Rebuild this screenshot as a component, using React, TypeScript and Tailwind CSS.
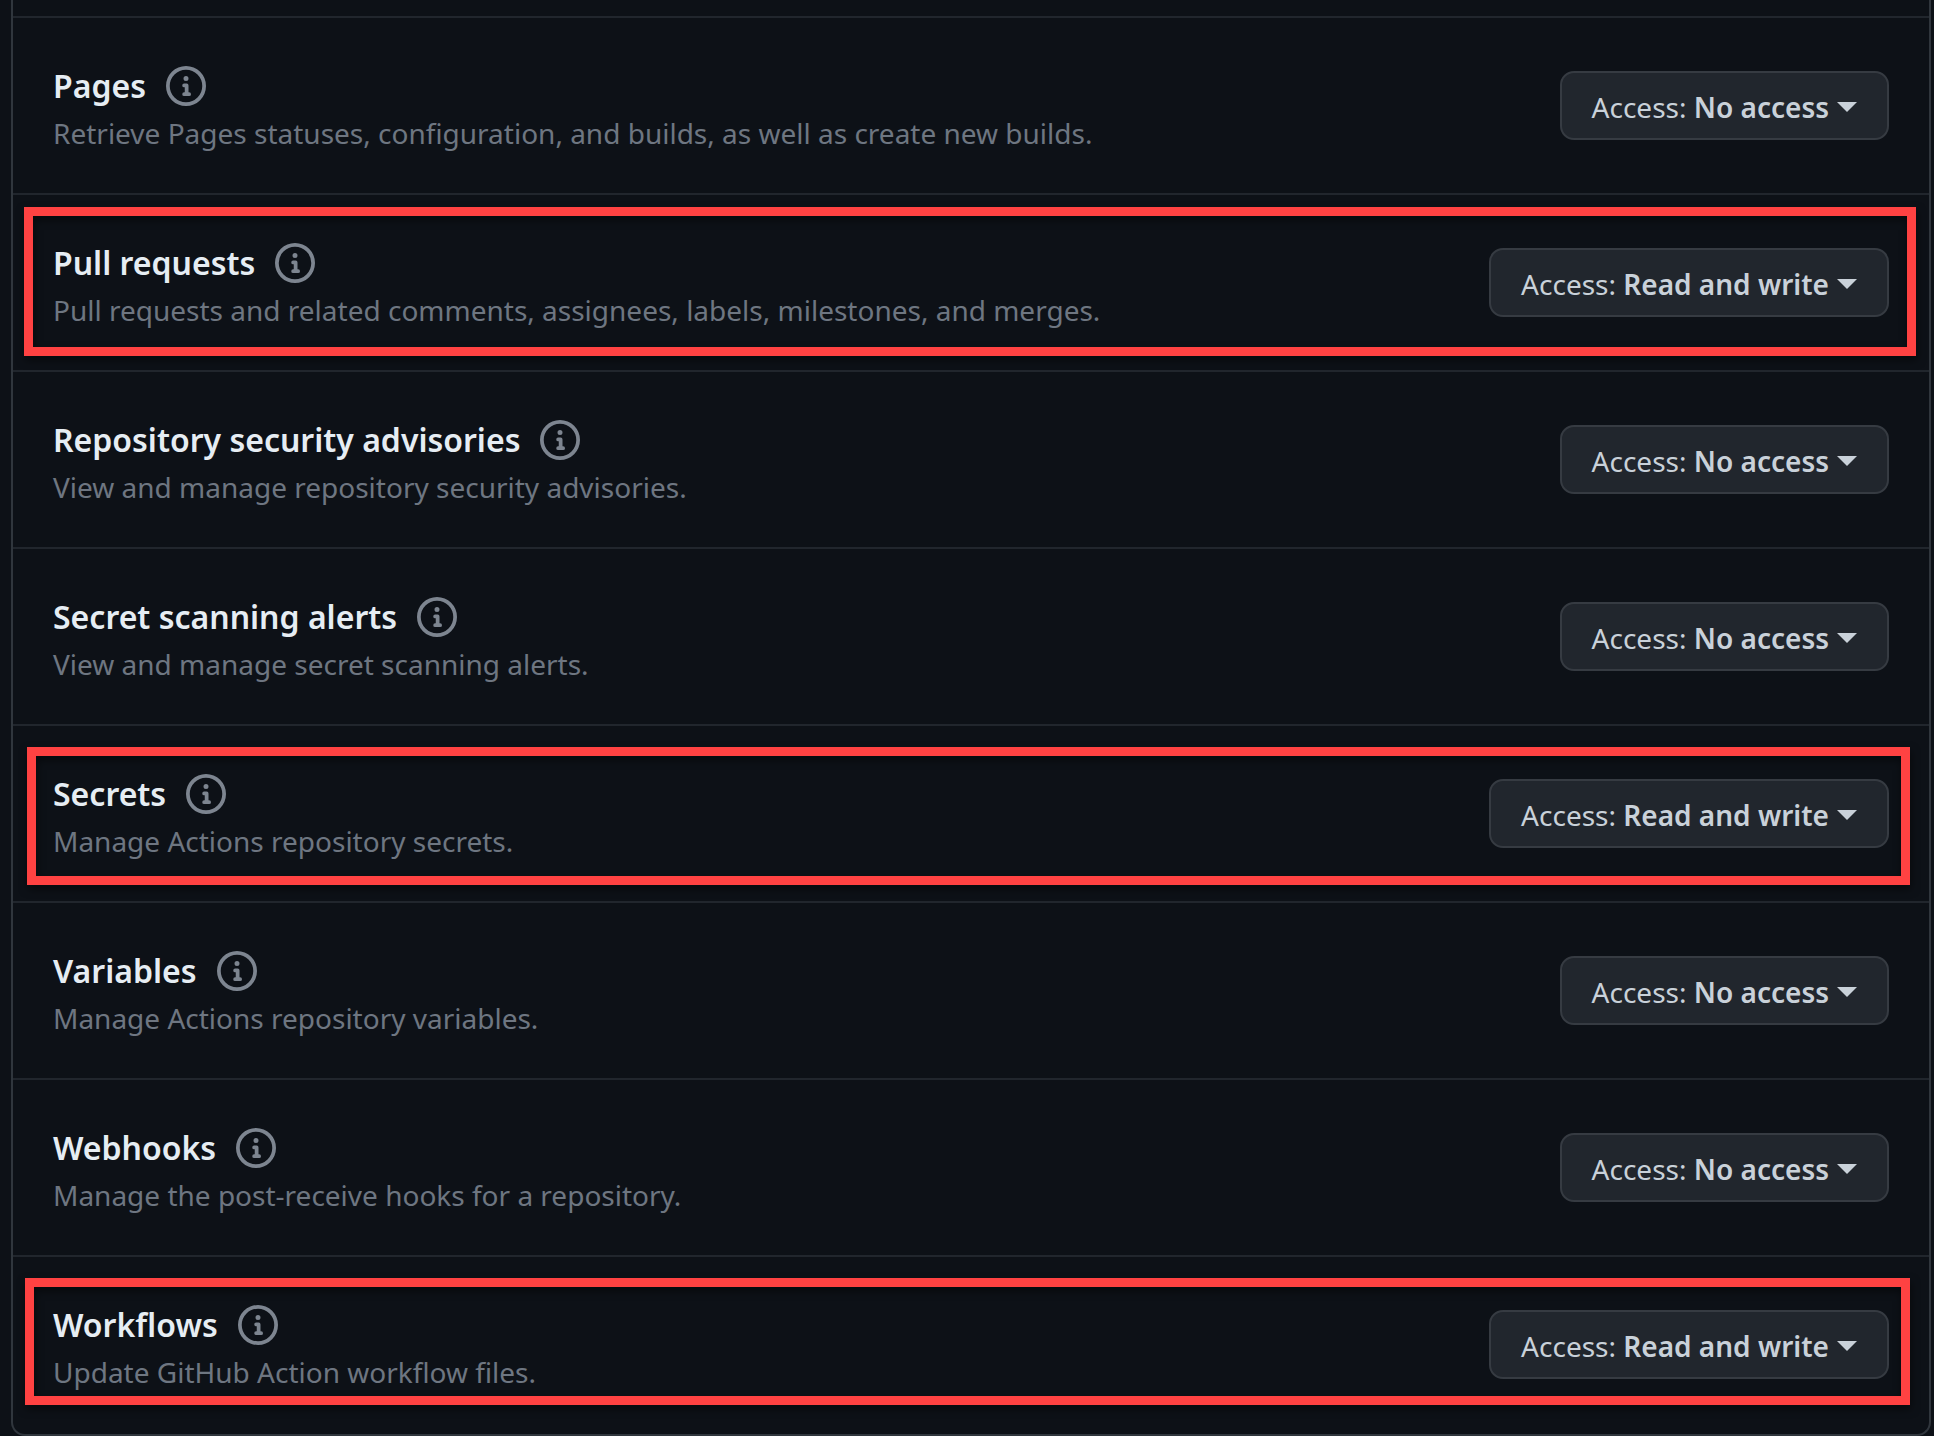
type Permission = {
  name: string;
  description: string;
  access: string;
  highlight?: string;
};

const permissions: Permission[] = [
  {
    name: "Pages",
    description: "Retrieve Pages statuses, configuration, and builds, as well as create new builds.",
    access: "No access",
  },
  {
    name: "Pull requests",
    description: "Pull requests and related comments, assignees, labels, milestones, and merges.",
    access: "Read and write",
    highlight: "top-[12px] bottom-[14px] left-[11px] right-[13px]",
  },
  {
    name: "Repository security advisories",
    description: "View and manage repository security advisories.",
    access: "No access",
  },
  {
    name: "Secret scanning alerts",
    description: "View and manage secret scanning alerts.",
    access: "No access",
  },
  {
    name: "Secrets",
    description: "Manage Actions repository secrets.",
    access: "Read and write",
    highlight: "top-[21px] bottom-[16px] left-[14px] right-[19px]",
  },
  {
    name: "Variables",
    description: "Manage Actions repository variables.",
    access: "No access",
  },
  {
    name: "Webhooks",
    description: "Manage the post-receive hooks for a repository.",
    access: "No access",
  },
  {
    name: "Workflows",
    description: "Update GitHub Action workflow files.",
    access: "Read and write",
    highlight: "top-[21px] bottom-[27px] left-[12px] right-[19px]",
  },
];

function InfoIcon() {
  return (
    <svg viewBox="0 0 16 16" className="size-10" fill="currentColor" aria-hidden="true">
      <path d="M0 8a8 8 0 1 1 16 0A8 8 0 0 1 0 8Zm8-6.5a6.5 6.5 0 1 0 0 13 6.5 6.5 0 0 0 0-13ZM6.5 7.75A.75.75 0 0 1 7.25 7h1a.75.75 0 0 1 .75.75v2.75h.25a.75.75 0 0 1 0 1.5h-2a.75.75 0 0 1 0-1.5h.25v-2h-.25a.75.75 0 0 1-.75-.75ZM8 6a1 1 0 1 1 0-2 1 1 0 0 1 0 2Z" />
    </svg>
  );
}

function PermissionRow({ name, description, access, highlight }: Permission) {
  return (
    <li className="relative flex items-start justify-between gap-8 border-t-2 border-[#21262d] pt-11 pr-10 pb-[37px] pl-10">
      <div>
        <div className="flex h-12 items-center gap-5">
          <h3 className="text-[32px] leading-[48px] font-semibold text-[#e6edf3]">{name}</h3>
          <button type="button" aria-label={`About ${name}`} className="text-[#7d8590]">
            <InfoIcon />
          </button>
        </div>
        <p className="text-[28px] leading-[46px] text-[#6e7681]">{description}</p>
      </div>
      <button
        type="button"
        aria-haspopup="menu"
        className="mt-[9px] flex h-[69px] shrink-0 items-center gap-2 rounded-[14px] border-2 border-[#363b42] bg-[#21262d] px-[30px] pt-[2px] text-[28px] text-[#c9d1d9]"
      >
        <span>
          Access: <span className="font-semibold">{access}</span>
        </span>
        <svg viewBox="0 0 20 10" className="h-[10px] w-5" fill="currentColor" aria-hidden="true">
          <path d="M0 0h20L10 10Z" />
        </svg>
      </button>
      {highlight && (
        <div
          className={`pointer-events-none absolute border-[9px] border-[#ff4242] drop-shadow-[1px_4px_4px_rgba(0,0,0,0.5)] ${highlight}`}
        />
      )}
    </li>
  );
}

export default function App() {
  return (
    <main className="min-h-screen overflow-hidden bg-[#0d1117] pr-[3px] pl-[11px] font-['Noto_Sans',sans-serif]">
      <ul className="rounded-b-[14px] border-2 border-t-0 border-[#30363d] pt-4 pb-[2px]">
        {permissions.map((permission) => (
          <PermissionRow key={permission.name} {...permission} />
        ))}
      </ul>
    </main>
  );
}
